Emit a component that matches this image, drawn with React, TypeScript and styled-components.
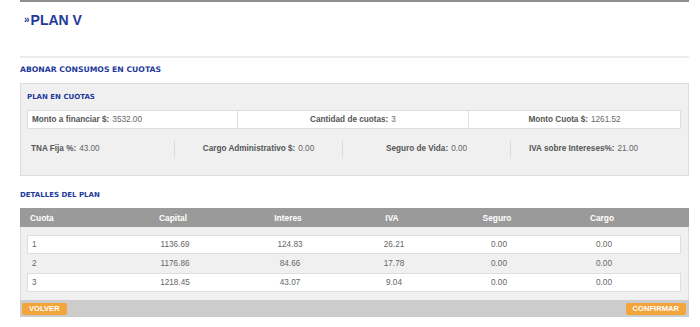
import styled, { createGlobalStyle } from "styled-components"

const GlobalStyle = createGlobalStyle`
  body {
    margin: 0;
    background: #fff;
    font-family: "Liberation Sans", Arial, sans-serif;
  }
`

const Page = styled.div`
  width: 669px;
  padding-left: 20px;
`

const TopRule = styled.div`
  height: 2px;
  background: #8e8e8e;
`

const Title = styled.h1`
  margin: 9px 0 0 4px;
  height: 18px;
  line-height: 18px;
  font-size: 14px;
  font-weight: bold;
  color: #24389a;
  display: flex;
  align-items: center;
  gap: 1px;
`

const Arrows = styled.span`
  font-size: 10px;
  line-height: 10px;
`

const Divider = styled.div`
  margin-top: 27px;
  height: 2px;
  background: #ececec;
`

const SectionTitle = styled.h2<{ $size: number; $top: number }>`
  margin: ${p => p.$top}px 0 0 0;
  height: 12px;
  line-height: 12px;
  font-family: "DejaVu Sans", Verdana, sans-serif;
  font-size: ${p => p.$size}px;
  font-weight: bold;
  color: #24389a;
`

const Panel = styled.div`
  margin-top: 7px;
  background: #f0f0f0;
  border: 1px solid #dcdcdc;
  padding: 7px 7px 18px 6px;
`

const SummaryRow = styled.div`
  margin-top: 7px;
  display: grid;
  grid-template-columns: 211px 231px 1fr;
  height: 19px;
`

const SummaryCell = styled.div<{ $align: string }>`
  background: #fff;
  border: 1px solid #dedede;
  margin-left: -1px;
  display: flex;
  align-items: center;
  justify-content: ${p => p.$align};
  padding: 0 4px;
  font-size: 8.2px;
  color: #666;
  &:first-child {
    margin-left: 0;
  }
`

const Label = styled.b`
  color: #555;
  margin-right: 3px;
`

const RatesRow = styled.div`
  margin-top: 11px;
  display: grid;
  grid-template-columns: 147px 168px 168px 146px;
  height: 17px;
`

const RateCell = styled.div<{ $align: string }>`
  display: flex;
  align-items: center;
  justify-content: ${p => p.$align};
  padding: 0 4px;
  font-size: 8.2px;
  color: #666;
  & + & {
    border-left: 1px solid #dadada;
  }
`

const Table = styled.div`
  margin-top: 7px;
  border: 1px solid #dcdcdc;
  border-top: none;
  background: #f0f0f0;
`

const columns = "90px 114px 116px 92px 118px 92px 1fr"

const HeadRow = styled.div`
  display: grid;
  grid-template-columns: ${columns};
  height: 19px;
  padding-left: 6px;
  margin-left: -1px;
  margin-right: -1px;
  background: #9a9a9a;
  color: #fff;
  font-size: 8.4px;
  font-weight: bold;
`

const Body = styled.div`
  padding: 8px 7px 8px 6px;
`

const DataRow = styled.div<{ $white: boolean }>`
  display: grid;
  grid-template-columns: ${columns};
  height: 19px;
  box-sizing: border-box;
  background: ${p => (p.$white ? "#fff" : "transparent")};
  border: 1px solid ${p => (p.$white ? "#dedede" : "transparent")};
  font-size: 8.2px;
  color: #666;
`

const Cell = styled.div<{ $left?: boolean }>`
  display: flex;
  align-items: center;
  justify-content: ${p => (p.$left ? "flex-start" : "center")};
  padding-left: ${p => (p.$left ? "4px" : "0")};
`

const Footer = styled.div`
  height: 17px;
  margin: 0 -1px -1px -1px;
  background: #cccccc;
  display: flex;
  align-items: center;
  justify-content: space-between;
  padding: 0 3px 0 2px;
`

const Button = styled.button`
  height: 12px;
  padding: 0 7px;
  border: none;
  border-radius: 2px;
  background: #f3a43b;
  color: #fff;
  font-family: "Liberation Sans", Arial, sans-serif;
  font-size: 7.6px;
  font-weight: bold;
  line-height: 12px;
  cursor: pointer;
`

const rows = [
  ["1", "1136.69", "124.83", "26.21", "0.00", "0.00"],
  ["2", "1176.86", "84.66", "17.78", "0.00", "0.00"],
  ["3", "1218.45", "43.07", "9.04", "0.00", "0.00"],
]

const heads = ["Cuota", "Capital", "Interes", "IVA", "Seguro", "Cargo"]

export default function App() {
  return (
    <Page>
      <GlobalStyle />
      <TopRule />
      <Title>
        <Arrows>»</Arrows>PLAN V
      </Title>
      <Divider />
      <SectionTitle $size={7.7} $top={6}>ABONAR CONSUMOS EN CUOTAS</SectionTitle>
      <Panel>
        <SectionTitle $size={7} $top={0}>PLAN EN CUOTAS</SectionTitle>
        <SummaryRow>
          <SummaryCell $align="flex-start"><Label>Monto a financiar $:</Label>3532.00</SummaryCell>
          <SummaryCell $align="center"><Label>Cantidad de cuotas:</Label>3</SummaryCell>
          <SummaryCell $align="center"><Label>Monto Cuota $:</Label>1261.52</SummaryCell>
        </SummaryRow>
        <RatesRow>
          <RateCell $align="flex-start"><Label>TNA Fija %:</Label>43.00</RateCell>
          <RateCell $align="center"><Label>Cargo Administrativo $:</Label>0.00</RateCell>
          <RateCell $align="center"><Label>Seguro de Vida:</Label>0.00</RateCell>
          <RateCell $align="center"><Label>IVA sobre Intereses%:</Label>21.00</RateCell>
        </RatesRow>
      </Panel>
      <SectionTitle $size={7} $top={13}>DETALLES DEL PLAN</SectionTitle>
      <Table>
        <HeadRow>
          {heads.map((h, i) => (
            <Cell key={h} $left={i === 0}>{h}</Cell>
          ))}
        </HeadRow>
        <Body>
          {rows.map((r, idx) => (
            <DataRow key={r[0]} $white={idx % 2 === 0}>
              {r.map((v, i) => (
                <Cell key={i} $left={i === 0}>{v}</Cell>
              ))}
            </DataRow>
          ))}
        </Body>
        <Footer>
          <Button>VOLVER</Button>
          <Button>CONFIRMAR</Button>
        </Footer>
      </Table>
    </Page>
  )
}
